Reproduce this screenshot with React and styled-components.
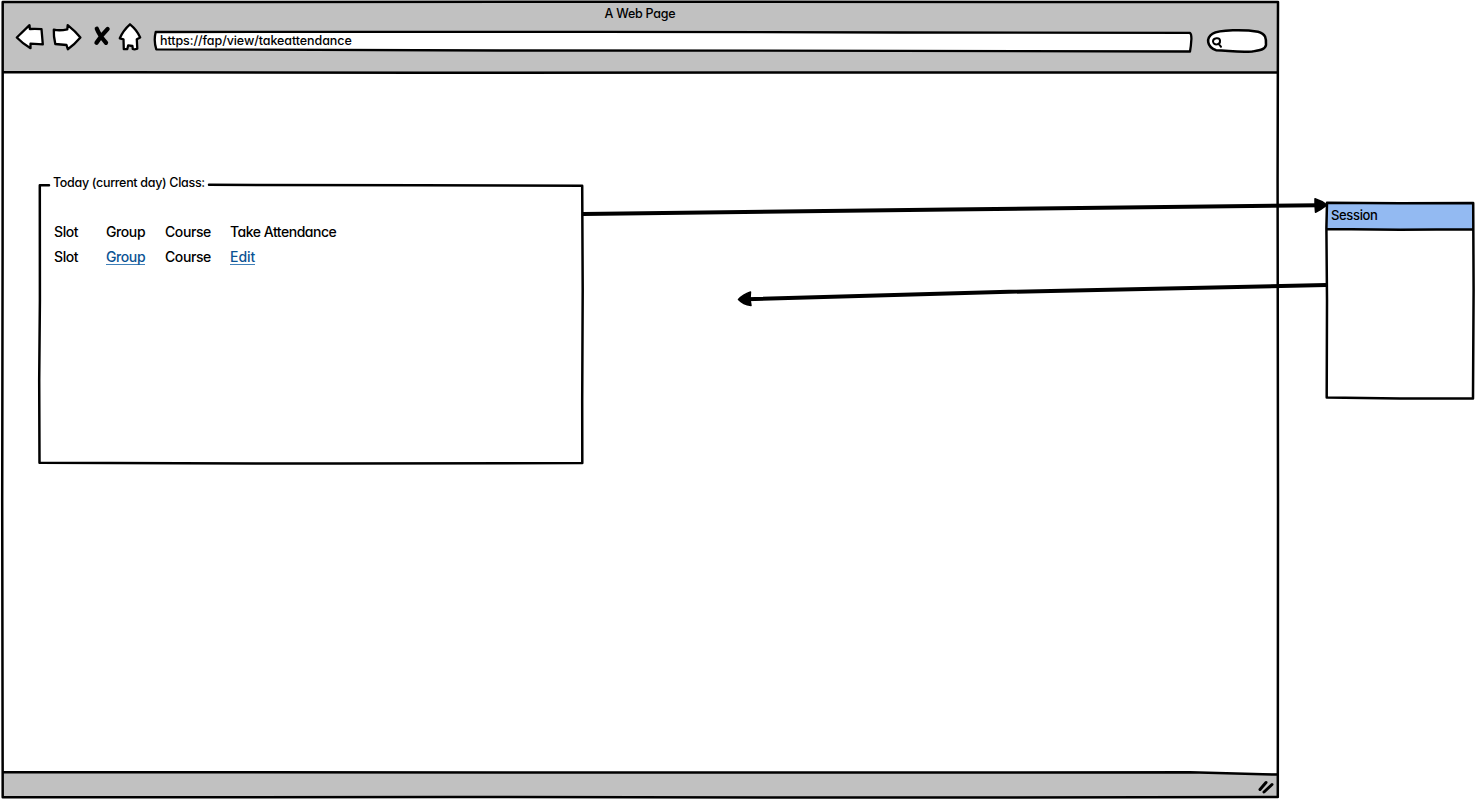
import React from "react";
import styled, { createGlobalStyle } from "styled-components";

const GlobalStyle = createGlobalStyle`
  * { box-sizing: border-box; }
  body {
    margin: 0;
    background: #fff;
    color: #000;
    font-family: Inter, "Liberation Sans", sans-serif;
    font-feature-settings: "cv11";
    overflow: hidden;
  }
`;

const Canvas = styled.main`
  position: relative;
  display: flex;
  align-items: flex-start;
  gap: 46px;
  width: 1475px;
  height: 800px;
  overflow: hidden;
`;

const Label = styled.span`
  display: block;
  font-size: ${(p) => p.$size || 13}px;
  line-height: 16px;
  font-weight: 450;
  letter-spacing: ${(p) => p.$track ?? -0.4}px;
  white-space: nowrap;
`;

/* Hand-drawn line work laid over a panel */
const Ink = styled.svg`
  position: absolute;
  inset: 0;
  width: 100%;
  height: 100%;
  overflow: visible;
  pointer-events: none;
  fill: none;
  stroke: #000;
  stroke-width: 2.5;
  stroke-linecap: round;
  stroke-linejoin: round;
`;

const Browser = styled.section`
  position: relative;
  display: flex;
  flex-direction: column;
  flex: none;
  width: 1280px;
  height: 798px;
  padding: 2px 2px 0;
`;

const Chrome = styled.header`
  flex: none;
  height: 71px;
  background: #c1c1c1;
`;

const Title = styled.div`
  display: flex;
  justify-content: center;
  padding-top: 4px;
  height: 20px;
`;

const Toolbar = styled.div`
  display: flex;
  align-items: flex-start;
  padding-left: 12px;
`;

const NavButtons = styled.svg`
  flex: none;
  width: 132px;
  height: 34px;
  fill: #fff;
  stroke: #000;
  stroke-width: 2.3;
  stroke-linejoin: round;
  stroke-linecap: round;
`;

const AddressBar = styled.div`
  position: relative;
  flex: none;
  width: 1040px;
  height: 24px;
  margin: 7px 15px 0 6px;
  padding: 4px 0 0 8px;
`;

const Url = styled(Label)`
  position: relative;
`;

const SearchBox = styled.div`
  position: relative;
  flex: none;
  width: 60px;
  height: 24px;
  margin-top: 7px;
`;

const Content = styled.div`
  flex: 1;
  padding: 112px 0 0 37px;
`;

const GroupBox = styled.section`
  position: relative;
  width: 545px;
  height: 280px;
  padding: 39px 14px 0 15px;
`;

const Legend = styled.div`
  position: absolute;
  left: 14px;
  top: -10px;
`;

const ClassGrid = styled.div`
  display: grid;
  grid-template-columns: 52px 59px 65px 120px;
  grid-auto-rows: 25px;
`;

const CellLink = styled.a`
  display: block;
  width: max-content;
  height: 16px;
  color: #0b5394;
  border-bottom: 1px solid #3f7fb8;
`;

const StatusBar = styled.footer`
  display: flex;
  justify-content: flex-end;
  flex: none;
  height: 25px;
  padding: 6px 2px 0;
  background: #c1c1c1;
`;

const Grip = styled.svg`
  width: 20px;
  height: 16px;
  stroke: #000;
  stroke-width: 3;
  stroke-linecap: round;
`;

const SessionCard = styled.section`
  position: relative;
  flex: none;
  width: 149px;
  height: 198px;
  margin-top: 202px;
`;

const SessionHeader = styled.header`
  margin: 1px 1px 0;
  height: 26px;
  padding: 4px 0 0 4px;
  background: #93baf2;
`;

const Connectors = styled(Ink)`
  stroke-width: 4;
`;

function Navigation() {
  return (
    <NavButtons viewBox="14 22 132 34" aria-hidden="true">
      <path d="M16.8 37.5L29.5 25.2L29.8 29Q36 28.5 41.5 29.2L42.8 44.3L30.5 43.7V48.2Q22.5 43.5 16.8 37.5Z" />
      <path d="M53.8 29.7Q60 31 67.3 29.3L67.7 25.2Q75.5 31.5 80.4 37.5Q74.5 44.5 67.8 49.2L66.5 45L55.3 44Q53.5 36 53.8 29.7Z" />
      <path d="M96.8 28.8Q99.5 35.5 106 42.8M107.6 29Q102 34.5 96.5 42.8" fill="none" strokeWidth="4.3" />
      <path d="M130 24.3Q137 30 140.2 37.5L136.8 39.2L137.3 48.6Q134.5 49.7 132.8 49L132.4 46L128.2 45.3L127.3 49L123.8 49.2L123.5 39.3L119.8 38.3Q123 30.5 130 24.3Z" />
    </NavButtons>
  );
}

export default function App() {
  return (
    <>
      <GlobalStyle />
      <Canvas>
        <Browser>
          <Chrome>
            <Title><Label $size={12.5} $track={-0.25}>A Web Page</Label></Title>
            <Toolbar>
              <Navigation />
              <AddressBar>
                <Ink viewBox="152 29 1040 24" preserveAspectRatio="none">
                  <path fill="#fff" strokeWidth="2.3" d="M155.7 32L600 31.8L900 32.5L1190 32.9Q1191.5 34 1191.4 39Q1191 46 1190 51.5L900 50.8L500 50.5L156.3 49.3Q153.5 41 155.7 32Z" />
                </Ink>
                <Url $size={12.5} $track={-0.08}>https://fap/view/takeattendance</Url>
              </AddressBar>
              <SearchBox>
                <Ink viewBox="1207 29 60 24">
                  <path fill="#fff" d="M1216 50.2C1206.5 46.5 1206 38 1212.5 33.8C1219 29.5 1245 29.5 1258 31.7C1266 33.7 1266.3 39 1266 45C1265 49.5 1261 50 1252 51.6C1238 52.7 1230 50.8 1216 50.2Z" />
                  <path strokeWidth="2" d="M1213 41.5C1213 37.8 1219.5 37 1220 40.5C1220.5 45 1213.5 46 1213 41.5Z M1219 44L1221 46.8" />
                </Ink>
              </SearchBox>
            </Toolbar>
          </Chrome>
          <Content>
            <GroupBox>
              <Ink viewBox="39 185 545 280">
                <path d="M49 185.2H39.8L39.9 300L39.2 380L39.5 462.7L180 463.3L340 463.6L582.3 463L582.2 400L582.7 290L582.2 185.8L420 185.2L209 184.8" />
              </Ink>
              <Legend><Label $size={12.5} $track={-0.31}>Today (current day) Class:</Label></Legend>
              <ClassGrid>
                <Label $size={14}>Slot</Label>
                <Label $size={14}>Group</Label>
                <Label $size={14}>Course</Label>
                <Label $size={14} $track={-0.48}>Take Attendance</Label>
                <Label $size={14}>Slot</Label>
                <CellLink><Label $size={14}>Group</Label></CellLink>
                <Label $size={14}>Course</Label>
                <CellLink><Label $size={14} $track={0}>Edit</Label></CellLink>
              </ClassGrid>
            </GroupBox>
          </Content>
          <StatusBar>
            <Grip viewBox="1256 779 20 16" aria-hidden="true">
              <path d="M1260 789.5L1266 782.5M1264 792L1272 784.5" />
            </Grip>
          </StatusBar>
          <Ink viewBox="0 0 1280 798">
            <path d="M2.7 2L640 1.8L1278 2L1277.6 180L1278 500L1277.8 797L900 797.6L450 797L2.7 797.3L2.2 500L2.6 250Z M3 72L420 72.7L1277 72.5M3 772L600 772.6L1190 772.3L1277 774.6" />
          </Ink>
        </Browser>
        <SessionCard>
          <SessionHeader><Label $track={-0.35}>Session</Label></SessionHeader>
          <Ink viewBox="1326 202 149 198">
            <path d="M1327 202.7L1400 203.2L1473.2 203L1473.6 290L1473 398.5L1400 398.5L1326.7 397.6L1327 300L1326.4 228Z M1327 229L1400 229.8L1473 229.3" />
          </Ink>
        </SessionCard>
        <Connectors viewBox="0 0 1475 800" aria-hidden="true">
          <path strokeLinecap="butt" d="M583 214L950 209.6L1318 205.3M1326 285L1000 292L746 299.2" />
          <path fill="#000" strokeWidth="1.5" d="M1327 205Q1321.5 209.5 1315.5 212.2L1315 205L1315 198.8Q1322 201 1327 205Z M738.5 299.5Q743 294.5 750.5 292L750 299L751 305.5Q743 304.5 738.5 299.5Z" />
        </Connectors>
      </Canvas>
    </>
  );
}
